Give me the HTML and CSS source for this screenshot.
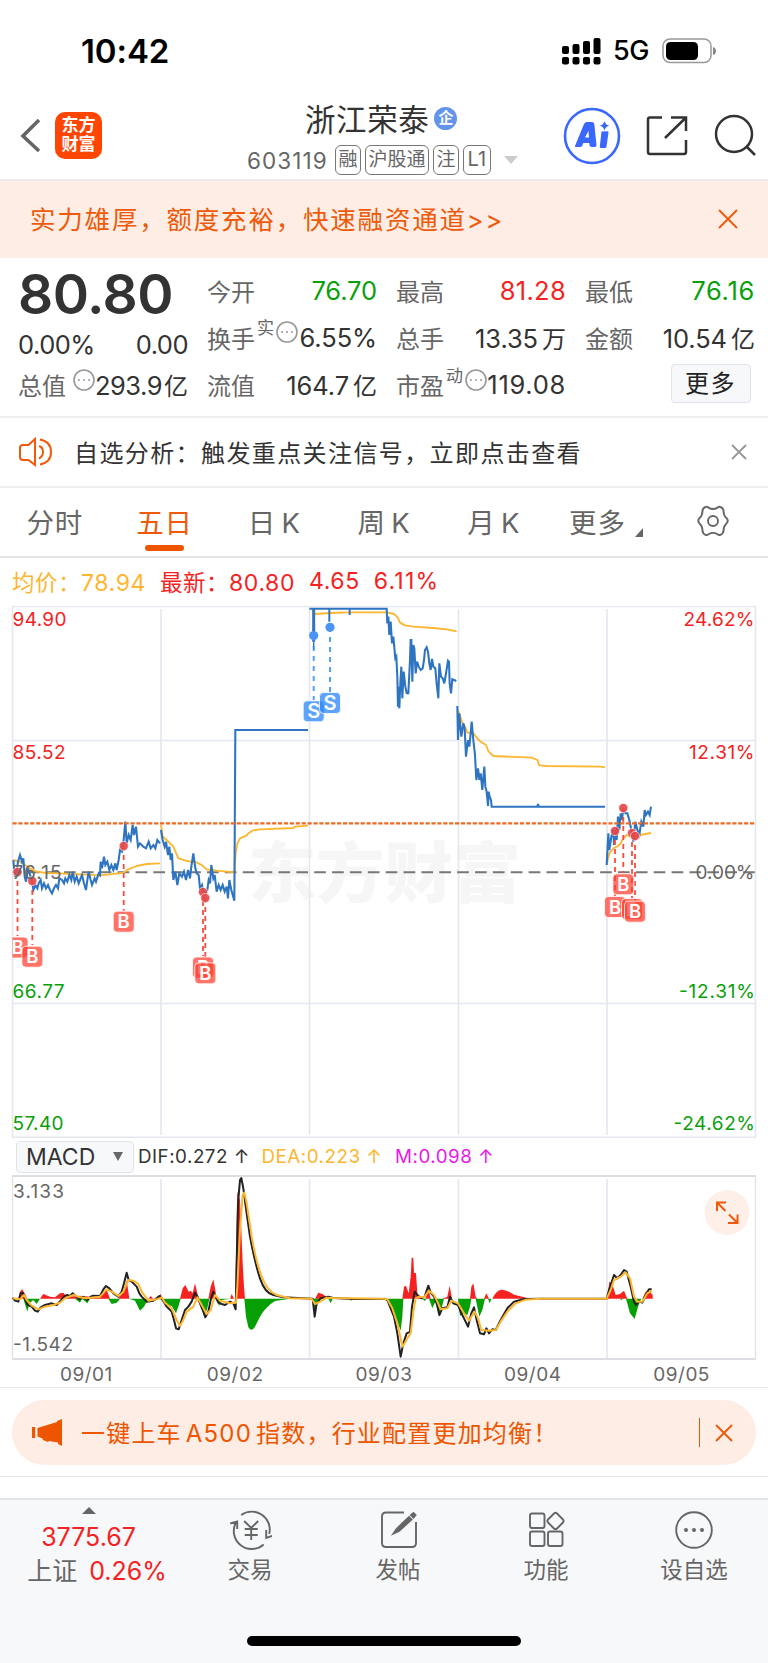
FILE: index.html
```html
<!DOCTYPE html>
<html lang="zh-CN">
<head>
<meta charset="utf-8">
<title>浙江荣泰 603119</title>
<link rel="stylesheet" href="styles.css">
</head>
<body>
<header class="status">
  <span class="clock">10:42</span>
  <span class="status-right">
    <svg class="signal" width="40" height="28" viewBox="0 0 40 28"><g fill="#000"><rect x="1" y="9" width="7" height="8" rx="2"/><rect x="11.500" y="7" width="7" height="10" rx="2"/><rect x="22" y="4" width="7" height="13" rx="2"/><rect x="32.500" y="1" width="7" height="16" rx="2"/><rect x="1" y="20" width="7" height="7.500" rx="2"/><rect x="11.500" y="20" width="7" height="7.500" rx="2"/><rect x="22" y="20" width="7" height="7.500" rx="2"/><rect x="32.500" y="20" width="7" height="7.500" rx="2"/></g></svg>
    <span class="net">5G</span>
    <svg width="56" height="26" viewBox="0 0 56 26"><rect x="1" y="1" width="48" height="23.500" rx="7" fill="none" stroke="#999" stroke-width="1.500"/><rect x="4" y="4" width="32" height="18" rx="4.500"/><path d="M51 9q3 1 3 4t-3 4z" fill="#888"/></svg>
  </span>
</header>

<nav class="topbar">
  <div class="top-left">
    <svg width="22" height="36" viewBox="0 0 22 36"><path d="M19 2 3 18l16 15" fill="none" stroke="#666" stroke-width="3.600"/></svg>
    <div class="logo"><span>东方</span><span>财富</span></div>
  </div>
  <div class="title-block">
    <div class="name">浙江荣泰<span class="ent">企</span></div>
    <div class="code-row"><span class="code">603119</span><span class="tag">融</span><span class="tag">沪股通</span><span class="tag">注</span><span class="tag lv">L1</span><svg class="drop" width="14" height="8" viewBox="0 0 14 8"><path d="M0 0h14L7 8z" fill="#ccc"/></svg></div>
  </div>
  <div class="top-icons">
    <svg class="ai" width="58" height="58" viewBox="0 0 58 58"><circle cx="29" cy="29" r="27" fill="none" stroke="#3a68ff" stroke-width="2.600"/><path d="M12 39 21 17q1-2 3-2h5q2 0 2.300 2L33.500 38q.2 2-1.800 2h-3q-2 0-2.200-2l-.2-2h-6l-1 2.500q-.6 1.500-2.300 1.500h-3.500q-2.500 0-1.500-1zM22 30.500h4l-.6-6.500z" fill="#3a68ff"/><path d="m38.500 24.500 6-.3q1.200 0 1 1.300l-2 14q-.2 1.500-1.700 1.500h-3.800q-1.500 0-1.200-1.500z" fill="#3a68ff"/><path d="M41.500 14q1 4 5 4.800-4 .8-5 4.700-1-4-5-4.700 4-.8 5-4.800z" fill="#3a68ff"/></svg>
    <svg width="42" height="42" viewBox="0 0 42 42" fill="none" stroke="#333" stroke-width="2.500"><path d="M16 2.500H4Q2 2.500 2 4.500V37q0 2 2 2h34q2 0 2-2V25M25 2.500h15V16M40 2.500 19 23"/></svg>
    <svg width="44" height="44" viewBox="0 0 44 44" fill="none" stroke="#333" stroke-width="2.500"><circle cx="21" cy="20" r="18"/><path d="m33 32 9 9"/></svg>
  </div>
</nav>

<div class="banner">
  <span>实力雄厚，额度充裕，快速融资通道&gt;&gt;</span>
  <svg width="20" height="20" viewBox="0 0 20 20"><path d="m1 1 18 18M19 1 1 19" stroke="#ee5a0a" stroke-width="1.900"/></svg>
</div>

<section class="quotes">
  <div class="qcol first">
    <div class="price">80.80</div>
    <div class="qrow chg"><b>0.00%</b><b>0.00</b></div>
    <div class="qrow"><i>总值</i><svg class="dots gap" width="22" height="22" viewBox="0 0 22 22"><circle cx="11" cy="11" r="10"/><path d="M5 11h2m3 0h2m3 0h2"/></svg><b class="v">293.9<em>亿</em></b></div>
  </div>
  <div class="qcol">
    <div class="qrow"><i>今开</i><b class="v green">76.70</b></div>
    <div class="qrow"><i>换手</i><sup>实</sup><svg class="dots" width="22" height="22" viewBox="0 0 22 22"><circle cx="11" cy="11" r="10"/><path d="M5 11h2m3 0h2m3 0h2"/></svg><b class="v">6.55%</b></div>
    <div class="qrow"><i>流值</i><b class="v">164.7<em>亿</em></b></div>
  </div>
  <div class="qcol">
    <div class="qrow"><i>最高</i><b class="v red">81.28</b></div>
    <div class="qrow"><i>总手</i><b class="v">13.35<em>万</em></b></div>
    <div class="qrow"><i>市盈</i><sup>动</sup><svg class="dots" width="22" height="22" viewBox="0 0 22 22"><circle cx="11" cy="11" r="10"/><path d="M5 11h2m3 0h2m3 0h2"/></svg><b class="v wide">119.08</b></div>
  </div>
  <div class="qcol">
    <div class="qrow"><i>最低</i><b class="v green wide">76.16</b></div>
    <div class="qrow"><i>金额</i><b class="v">10.54<em>亿</em></b></div>
    <div class="qrow"><button class="more">更多</button></div>
  </div>
</section>

<div class="notice">
  <svg width="34" height="30" viewBox="0 0 34 30" fill="none" stroke="#ee5a0a" stroke-width="2"><path d="M16 2v26L9.500 23H4q-3 0-3-3v-9q0-3 3-3h5.500zM20 9q4 1.500 4 6t-4 6.500M21 2.500q11 2 11 12.500T21 27.500"/></svg>
  <span>自选分析：触发重点关注信号，立即点击查看</span>
  <svg class="x" width="16" height="16" viewBox="0 0 16 16"><path d="m1 1 14 14M15 1 1 15" stroke="#999" stroke-width="1.900"/></svg>
</div>

<nav class="tabs">
  <span>分时</span><span class="active">五日</span><span>日 K</span><span>周 K</span><span>月 K</span>
  <span class="tab-more">更多<svg width="8" height="9" viewBox="0 0 8 9"><path d="M8 0v9H0z" fill="#666"/></svg></span>
  <span><svg width="34" height="32" viewBox="0 0 34 32" fill="none" stroke="#666" stroke-width="1.900"><path d="M9.500 2q1.500-.7 3 .6 4.500 2.800 9 0 1.500-1.300 3-.6 3 1.200 3 4 0 4.500 3 7.200 2.500 2.500 0 5.200-3 3-3 7.200 0 3-3 4.200-1.500.7-3-.6-4.500-2.700-9 0-1.500 1.300-3 .6-3-1.200-3-4.200 0-4.200-3-7.200-2.500-2.700 0-5.200 3-2.700 3-7.200 0-2.800 3-4z"/><circle cx="17" cy="16" r="5"/></svg></span>
</nav>

<div class="legend"><span class="avg">均价：<b>78.94</b></span><span class="last">最新：<b>80.80</b></span><b>4.65</b><b class="pct">6.11%</b></div>

<svg class="chart" width="768" height="532" viewBox="0 606 768 532">
  <defs>
    <g id="buy"><rect x="-10.500" y="-10.500" width="21" height="21" rx="4" fill="#ff3d2e" fill-opacity=".72" stroke="#fff" stroke-width=".8"/><text y="6.500" class="mark">B</text></g>
    <g id="sell"><rect x="-10.500" y="-10.500" width="21" height="21" rx="4" fill="#2b88fb" fill-opacity=".76" stroke="#fff" stroke-width=".8"/><text y="7" class="mark s">S</text></g>
    <clipPath id="plot"><rect x="12.500" y="606" width="744" height="532"/></clipPath>
  </defs>
  <text class="watermark" x="248" y="897" textLength="273" lengthAdjust="spacingAndGlyphs">东方财富</text>
  <g fill="none" stroke="#e3e7ef" stroke-width="1.600"><path d="M12.500 1138V606.500H755.500V1138M12 740.500H755M12 1003.500H755M12 1137.300H756M161 609v526M309.500 609v526M458.500 609v526M607 609v526"/></g>
  <path d="M12.500 872.300H755" stroke="#777" stroke-width="2" stroke-dasharray="11.700 6.170" stroke-dashoffset="2.100"/>
  <g fill="none" stroke="#fdb62f" stroke-width="5.500" stroke-linejoin="round">
    <g transform="translate(0 560) scale(.33333)"><path d="M40 900 60 905 90 925 110 935 140 939 180 940 210 942 260 944 300 946 330 943 370 938 385 928 410 918 440 912 480 910M483 795 488 830 500 840 520 860 535 895 560 903 590 907 605 915 620 928 650 932 703 937 707 880 712 850 720 835 740 826 745 820 760 811 780 808 880 804 885 800 924 797"/></g>
    <g transform="translate(290 560) scale(.33333)"><path d="M75 162 120 159 180 157 290 157 312 162 323 172 330 188 345 196 370 200 430 204 470 208 500 214"/></g>
    <g transform="translate(450 600) scale(.33333)"><path d="M24 330 36 365 45 380 52 398 70 400 88 422 108 435 116 455 130 468 245 473 262 480 268 496 290 498 450 500 465 502M470 795 478 760 490 745 504 738 512 730 520 715 530 705 545 712 570 705 603 699"/></g>
  </g>
  <g fill="none" stroke="#2f74c0" stroke-width="6.200" stroke-linejoin="miter">
    <g transform="translate(0 560) scale(.33333)"><path d="M40 900 45 950 50 935 54 905 60 885 66 905 70 895 74 950 78 965 84 925 90 945 96 960 100 990 106 975 112 985 116 970 122 960 126 985 132 970 138 985 144 975 150 990 156 1000 162 985 168 975 174 985 178 955 186 960 192 970 196 955 202 965 208 945 214 960 218 935 224 965 230 950 236 970 240 960 246 945 252 970 258 990 262 960 266 935 272 960 276 975 284 955 288 965 296 940 300 945 302 905 306 925 312 890 316 915 322 905 328 930 334 915 340 930 346 910 350 930 356 900 360 870 366 875 370 850 376 785 380 850 386 825 392 840 398 795 402 825 408 800 414 860 420 850 430 860 438 865 446 845 452 865 460 855 466 865 472 840 480 850M483 810 488 840 494 860 498 845 504 885 508 860 512 900 516 880 520 960 526 935 532 975 538 940 546 950 552 935 558 960 564 930 570 955 574 920 580 880 586 925 590 940 596 945 600 985 606 975 612 1010 616 1000 622 990 626 960 630 970 634 915 640 955 644 945 650 995 656 975 662 990 668 975 674 995 680 980 684 1015 688 960 694 990 703 1022 706 510 924 510"/></g>
    <g transform="translate(290 560) scale(.33333)"><path d="M58 146H290L292 190 295 170 298 225 302 185 306 250 310 230 316 295 319 290 322 350 324 440 325 380 328 445 331 370 334 320 337 415 341 335 346 380 350 400 355 400 360 300 362 240 364 240 367 365 370 255 373 265 377 340 381 305 386 320 392 330 398 325 402 300 405 270 410 262 414 275 418 310 422 330 426 297 430 320 436 325 440 370 445 415 448 310 453 350 458 355 463 370 468 340 474 302 477 305 479 370 483 400 487 358 492 360 499 363"/><path d="M71 146V245" stroke-width="9"/><path d="M71 240V268" stroke-width="4"/><path d="M118 146V185M179 146V165" stroke-width="6"/></g>
    <g transform="translate(450 600) scale(.33333)"><path d="M22 318 24 420 28 340 34 410 40 370 44 385 48 470 54 420 58 440 62 400 65 365 70 420 75 465 79 540 84 505 88 540 92 520 97 570 101 520 103 500 106 560 110 575 114 618 116 575 119 590 123 600 125 620 262 620 264 612 266 620 465 620M470 795 475 700 478 750 484 710 490 690 492 735 496 690 500 720 504 650 508 690 512 640 516 660 520 625 526 640 532 640 538 660 544 690 550 725 556 665 562 690 568 705 574 665 580 680 584 630 588 645 594 635 599 645 603 620"/></g>
  </g>
  <path d="M12.500 823.300H755" stroke="#ee6a22" stroke-width="2.200" stroke-dasharray="4.200 1.700"/>
  <g fill="none" stroke="#ff4a3b" stroke-width="1.800" stroke-dasharray="5 4"><path d="M17.500 872V936M32.300 881V945M123.700 846V911M203 892V956M205.300 898V962M615 831V896M623.300 808V873M632 833V898M635 836V901"/></g>
  <g fill="none" stroke="#2b88fb" stroke-opacity=".8" stroke-width="2" stroke-dasharray="5 5"><path d="M313.700 636V700M330 627V692"/></g>
  <g fill="#e5484a" fill-opacity=".92" stroke="#fff" stroke-width=".6"><circle cx="17.500" cy="872" r="4.600"/><circle cx="32.300" cy="881" r="4.600"/><circle cx="123.700" cy="846" r="4.600"/><circle cx="203" cy="892" r="4.600"/><circle cx="205.300" cy="898" r="4.600"/><circle cx="615" cy="831" r="4.600"/><circle cx="623.300" cy="808" r="4.600"/><circle cx="632" cy="833" r="4.600"/><circle cx="635" cy="836" r="4.600"/></g>
  <g fill="#4a94f8"><circle cx="313.700" cy="635.500" r="4.600"/><circle cx="330" cy="627.300" r="4.600"/></g>
  <g clip-path="url(#plot)">
    <use href="#buy" x="17.500" y="947.500"/><use href="#buy" x="32.300" y="956.700"/><use href="#buy" x="123.700" y="921.700"/><use href="#buy" x="203" y="967.500"/><use href="#buy" x="205.300" y="973.300"/>
    <use href="#buy" x="615" y="907"/><use href="#buy" x="623.300" y="884.300"/><use href="#buy" x="632" y="909"/><use href="#buy" x="635" y="911.700"/>
    <use href="#sell" x="313.700" y="711.300"/><use href="#sell" x="330" y="703"/>
  </g>
  <g class="axis">
    <text x="12.500" y="626" textLength="54" class="up">94.90</text><text x="12.500" y="758.500" textLength="53" class="up">85.52</text><text x="12.500" y="879" textLength="49" class="mid">76.15</text><text x="12.500" y="997.500" textLength="52" class="down">66.77</text><text x="12.500" y="1130" textLength="51" class="down">57.40</text>
    <text x="683.500" y="626" textLength="71" class="up">24.62%</text><text x="689" y="758.500" textLength="65.500" class="up">12.31%</text><text x="695.500" y="879" textLength="59" class="mid">0.00%</text><text x="679" y="997.500" textLength="76" class="down">-12.31%</text><text x="673.500" y="1130" textLength="81.500" class="down">-24.62%</text>
  </g>
</svg>

<div class="macd-head">
  <span class="select">MACD<svg width="10" height="9" viewBox="0 0 10 9"><path d="M0 0h10L5 9z" fill="#666"/></svg></span>
  <span class="dif">DIF:0.272 ↑</span><span class="dea">DEA:0.223 ↑</span><span class="m">M:0.098 ↑</span>
</div>

<svg class="chart" width="768" height="185" viewBox="0 1175 768 185">
  <path d="M12.500 1359V1176H755.500V1359" fill="none" stroke="#e0e3ea" stroke-width="1.300"/>
  <path d="M12 1176H756M12 1359H756" stroke="#dcdee3" stroke-width="1.800"/>
  <path d="M161 1179v179M309.500 1179v179M458.500 1179v179M607 1179v179" stroke="#e3e7ef" stroke-width="1.600"/>
  <g transform="translate(0 1120) scale(.33333)">
    <path fill="#f52222" d="M55 536 60 515 66 508 74 520 82 536zM120 536 130 522 150 530 165 532 180 520 190 518 200 530 240 527 300 533 308 520 320 510 330 536zM355 536 370 515 380 480 388 536zM445 536 452 528 460 536zM472 536 482 522 488 536zM540 536 548 505 556 495 566 515 572 512 578 520 585 490 592 520 598 536zM625 536 632 500 640 478 646 510 650 536zM690 536 695 522 702 536zM705 536 708 400 712 215 720 240 724 330 728 430 732 500 735 536zM945 536 955 518 968 522 985 536z"/>
    <path fill="#06a006" d="M70 536 82 575 88 550 100 540 110 552 120 536zM225 536 240 548 246 536 262 550 270 536zM325 536 335 552 350 548 360 536zM388 536 405 542 420 572 432 560 445 536zM490 536 500 556 515 558 528 580 535 560 542 536zM595 536 605 550 615 585 622 565 628 536zM650 536 657 558 665 540 690 536zM733 536 738 590 745 622Q755 638 765 620L780 590Q797 560 825 543L870 536zM938 536 944 595 950 545 960 536zM985 536 992 550 998 536zM1048 536 1053 543 1058 536z"/>
  </g>
  <g transform="translate(384 1120) scale(.33333)">
    <path fill="#f52222" d="M55 536 60 500 66 497 74 520 80 470 83 413 88 413 90 458 96 460 100 520 110 536zM125 536 133 505 140 536zM175 536 190 530 197 497 204 536zM258 536 262 500 268 490 275 530 280 536zM300 536 307 520 315 536zM325 536Q337 510 352 509T390 524L440 536zM670 536 676 485 684 490 695 525 708 522 720 512 730 536zM775 536 785 515 795 512 806 525 806 536z"/>
    <path fill="#06a006" d="M8 536 20 570 35 590 50 632 55 590 58 536zM115 536 122 543 128 536zM135 536 145 565 152 550 158 545 166 590 174 560 180 536zM222 536 228 588 238 580 250 585 258 560 262 536zM275 536 286 590 295 570 303 536zM312 536 317 550 322 536zM708 536 712 541 716 536zM726 536 738 580 752 597 762 560 770 540 772 536z"/>
  </g>
  <g fill="none" stroke-width="6" stroke-linejoin="round">
    <g transform="translate(0 1120) scale(.33333)">
      <path stroke="#222" d="M38 533 45 542 55 545 62 520 68 518 76 540 84 555 95 560 105 572 113 575 122 562 135 555 155 550 170 555 182 542 192 530 200 525 210 528 218 520 228 530 240 538 250 530 262 540 272 530 280 527 300 528 310 508 318 498 328 505 340 520 355 530 365 515 372 490 380 458 386 480 395 485 410 500 418 520 425 530 440 545 460 542 478 528 488 540 500 560 515 575 522 600 528 625 536 628 545 600 555 570 565 560 575 545 585 518 592 530 600 550 610 575 616 592 625 575 632 540 640 515 646 530 655 548 665 552 675 555 690 545 700 550 707 568 709 480 714 250 720 180 724 174 730 205 740 280 750 350 Q765 430 780 475 T820 525 L850 532 938 536 944 590 950 550 962 535 985 530 1000 534 1060 537 1152 537"/>
      <path stroke="#fdb62f" d="M38 535 60 538 72 525 80 540 95 557 115 568 135 560 160 555 180 548 195 535 220 525 240 532 260 535 300 530 320 508 335 515 355 528 370 515 385 480 400 482 415 492 425 515 445 542 470 538 485 532 495 548 515 565 530 600 540 618 550 600 560 575 580 560 592 532 605 555 620 582 632 570 645 525 660 542 690 550 708 548 712 500 720 330 728 225 733 218 740 250 755 350Q768 425 785 470T830 525L870 535 935 536 945 552 960 545 980 533 1000 534 1152 536"/>
    </g>
    <g transform="translate(384 1120) scale(.33333)">
      <path stroke="#222" d="M0 536 10 540 20 565 30 590 40 640 50 710 58 670 68 640 78 635 84 560 92 515 100 525 112 535 122 530 133 497 140 518 150 530 158 550 166 585 175 565 190 562 198 530 208 550 222 555 232 580 240 595 252 620 262 580 270 562 278 600 288 640 300 643 307 625 315 640 325 628 335 630 350 600 370 565 390 545 420 537 470 536 668 536 675 510 690 465 700 475 710 465 720 450 728 455 740 500 750 545 756 555 765 545 775 548 785 525 795 508 803 508"/>
      <path stroke="#fdb62f" d="M0 536 10 538 25 565 40 610 52 665 56 680 70 655 80 640 88 575 95 535 105 530 120 532 135 512 150 525 160 545 170 568 190 565 202 542 222 550 240 580 255 602 265 585 272 575 282 595 292 630 315 632 335 630 350 605 370 575 395 550 425 539 470 536 668 536 680 510 690 480 710 470 725 457 738 475 750 530 760 545 775 545 790 520 803 512"/>
    </g>
  </g>
  <circle cx="727" cy="1212.500" r="22.500" fill="#feefe8"/>
  <path d="M717 1211v-8.500h9M717.500 1203l8 8M737.500 1214.500v8.500h-9.500M737 1222.500l-8-8" fill="none" stroke="#ee5a0a" stroke-width="2"/>
  <g class="axis"><text x="13" y="1198" textLength="51" class="mid">3.133</text><text x="13" y="1351" textLength="60" class="mid">-1.542</text></g>
</svg>
<div class="dates"><span>09/01</span><span>09/02</span><span>09/03</span><span>09/04</span><span>09/05</span></div>

<div class="promo-wrap"><div class="promo">
  <svg width="31" height="27" viewBox="0 0 31 27" fill="#ee5500"><path d="M0 8h3.200v11H0zM5.500 9 25 3V2l5-2v27l-4-2v-1.500l-9-1.500-1 1-5-2-.5-1.500-5-2z"/></svg>
  <span class="promo-text">一键上车<b>A500</b>指数，行业配置更加均衡！</span>
  <span class="bar"></span>
  <svg width="18" height="18" viewBox="0 0 18 18"><path d="m1 1 16 16M17 1 1 17" stroke="#ee5a0a" stroke-width="1.900"/></svg>
</div></div>

<footer class="bottom">
  <div class="index"><svg width="14" height="7" viewBox="0 0 14 7"><path d="M0 7 7 0l7 7z" fill="#666"/></svg><b>3775.67</b><div>上证<b>0.26%</b></div></div>
  <div class="item"><svg width="44" height="40" viewBox="-1.200 0 44 40" fill="none" stroke="#666" stroke-width="1.900"><path d="M12 5A18 18 0 0 1 40 24M34.500 34.500A18 18 0 0 1 7 12M1 13.500l7-2V19M43 26l-6 2v-8M15 11l7 7 7-7M22 18v12M15.500 19h13M15.500 25h13"/></svg><span>交易</span></div>
  <div class="item"><svg width="44" height="40" viewBox="-1 0 44 40" fill="none" stroke="#666" stroke-width="1.900"><path d="M27 2.500H9q-4 0-4 4V33q0 4 4 4h26q4 0 4-4V12"/><path d="m16.500 23.500 3-4.500L32 7l2.500 2.500L22 21zM34 5l2.500-2 2 2-2 2.500z" fill="#666"/></svg><span>发帖</span></div>
  <div class="item"><svg width="44" height="40" viewBox="0 0 44 40" fill="none" stroke="#666" stroke-width="1.900"><rect x="6" y="3.500" width="14.500" height="14.500" rx="2"/><rect x="6" y="21.500" width="14.500" height="14.500" rx="2"/><rect x="24" y="21.500" width="14.500" height="14.500" rx="2"/><path d="M30 3.500q1.500-1.300 3 0l6 6q1.200 1.500 0 3l-6 6q-1.500 1.200-3 0l-6-6q-1.200-1.500 0-3z"/></svg><span>功能</span></div>
  <div class="item"><svg width="44" height="40" viewBox="0 0 44 40" fill="none" stroke="#666" stroke-width="1.900"><circle cx="22" cy="20" r="17.800"/><g fill="#666" stroke="none"><circle cx="14" cy="20" r="2"/><circle cx="22" cy="20" r="2"/><circle cx="30" cy="20" r="2"/></g></svg><span>设自选</span></div>
  <div class="home"></div>
</footer>
</body>
</html>
```
FILE: styles.css
```css
* { box-sizing: border-box; }
body {
  margin: 0;
  width: 768px;
  height: 1663px;
  background: #fff;
  color: #333;
  font-family: Inter, "Noto Sans CJK SC", sans-serif;
  font-weight: 400;
  overflow: hidden;
}
svg { display: block; flex: none; }
b { font-weight: 400; }
i, em { font-style: normal; }
span, i, b, em { white-space: nowrap; }

.status { height: 90px; padding: 12px 50px 0 81px; display: flex; justify-content: space-between; align-items: center; color: #000; }
.clock { font-size: 33px; font-weight: 600; letter-spacing: -0.100px; line-height: 40px; }
.status-right { display: flex; align-items: center; }
.signal { margin-right: 12px; }
.net { font-size: 27px; font-weight: 500; letter-spacing: -0.5px; width: 49px; line-height: 30px; }

.topbar { height: 91px; border-bottom: 2px solid #ebebeb; display: grid; grid-template-columns: 240px 1fr 208px; }
.top-left { display: flex; align-items: flex-start; padding: 22px 0 0 20px; gap: 13px; }
.top-left svg { margin-top: 6px; }
.logo { width: 47px; height: 47px; border-radius: 10px; background: #ff4502; color: #fff; display: flex; flex-direction: column; align-items: center; justify-content: center; font-size: 17px; font-weight: 700; line-height: 19px; padding-bottom: 1px; }
.title-block { padding-top: 11px; }
.name { height: 34px; display: flex; align-items: center; padding-left: 65px; font-size: 30.500px; letter-spacing: 0.600px; }
.ent { width: 23px; height: 23px; border-radius: 50%; background: #6394ea; color: #fff; font-size: 15px; font-weight: 700; line-height: 22px; text-align: center; margin-left: 5px; letter-spacing: 0; }
.code-row { margin-top: 10px; height: 30px; display: flex; align-items: center; padding-left: 7px; color: #666; }
.code { font-size: 22.500px; width: 88px; letter-spacing: 1.100px; }
.tag { border: 1.500px solid #777; border-radius: 6px; height: 30px; padding: 0 2.500px; margin-right: 4px; font-size: 19px; line-height: 27px; color: #666; }
.tag.lv { padding: 0 3.500px; font-size: 20px; }
.drop { margin-left: 9px; }
.top-icons { display: flex; align-items: flex-start; padding-top: 16px; }
.ai { margin: 1px 25px 0 3px; }
.top-icons svg:nth-child(2) { margin: 9px 26px 0 0; }
.top-icons svg:nth-child(3) { margin: 8px 0 0 -1px; }

.banner { height: 77px; background: #feede5; color: #ee5a0a; display: flex; align-items: center; justify-content: space-between; padding: 0 30px 0 30px; font-size: 25.500px; }
.banner span { letter-spacing: 1.800px; margin-top: -4px; }
.banner svg { margin-top: -2px; }

.quotes { height: 160px; border-bottom: 2px solid #efeff1; display: flex; gap: 19px; padding: 8.500px 13px 0 18px; }
.qcol { width: 170px; }
.qrow { height: 47.300px; display: flex; align-items: center; font-size: 24px; color: #666; }
.qrow b { color: #333; font-size: 25.500px; letter-spacing: -0.100px; }
.first .qrow b { letter-spacing: -0.500px; }
.qrow .wide { letter-spacing: 0.700px; }
.qrow .v { margin-left: auto; }
.qrow em { font-size: 24px; margin-left: 4px; letter-spacing: 0; }
.first .qrow em { margin-left: 2px; }
.qrow sup { font-size: 17px; line-height: 20px; margin: -18px 2px 0 2px; }
.qrow .green { color: #0aa00a; }
.qrow .red { color: #f52222; letter-spacing: 0.300px; }
.dots { fill: none; stroke: #999; stroke-width: 1.600; margin-top: -10px; }
.dots.gap { margin-left: 7px; }
.price { height: 61.500px; font-size: 55px; line-height: 55px; font-weight: 600; letter-spacing: -0.500px; }
.chg { height: 33px; justify-content: space-between; }
.more { font: 400 24px/30px Inter, "Noto Sans CJK SC", sans-serif; color: #222; width: 80px; height: 39px; padding: 0; margin: -2px 0 0 85.500px; letter-spacing: 1.500px; border: 1.500px solid #e0e4ea; border-radius: 4px; background: #f7f8fa; }

.notice { height: 70px; border-bottom: 2px solid #efeff1; display: flex; align-items: center; padding: 0 20px 0 19px; font-size: 24px; }
.notice span { margin: -2px 0 0 21px; letter-spacing: 1.400px; }
.notice .x { margin: 0 1px 0 auto; }

.tabs { height: 70px; border-bottom: 2px solid #e1e3e8; display: grid; grid-template-columns: repeat(7, 1fr); font-size: 27.500px; color: #666; }
.tabs > span { display: flex; align-items: center; justify-content: center; letter-spacing: 0.800px; word-spacing: -3px; padding-bottom: 2px; }
.tabs .active { color: #ee5a0a; position: relative; }
.active::after { content: ""; position: absolute; bottom: 5px; left: 35px; width: 39px; height: 6px; border-radius: 3px; background: #ee5500; }
.tabs .tab-more { padding-left: 5px; }
.tab-more svg { margin: 22px 0 0 9px; }

.legend { height: 48px; display: flex; align-items: center; padding: 0 0 2px 12px; font-size: 22.500px; color: #f52222; letter-spacing: 0.500px; }
.legend b { font-size: 23px; letter-spacing: 0.600px; }
.legend .avg { color: #fdb62f; margin-right: 14px; }
.legend .last { margin-right: 14px; }
.legend > b { margin-right: 14px; }
.legend .pct { letter-spacing: 1.200px; }

.chart { display: block; }
.axis text { font: 400 19px Inter, sans-serif; }
.up { fill: #f52222; }
.down { fill: #0aa00a; }
.mid { fill: #666; }
.mark { font: 600 18.500px Inter, sans-serif; fill: #fff; text-anchor: middle; }
.mark.s { font-size: 20px; }
.watermark { font: 900 66px "Noto Sans CJK SC", sans-serif; fill: #f6f6f6; }

.macd-head { height: 37px; display: flex; align-items: center; padding-left: 16px; font-size: 18.800px; letter-spacing: 0.500px; }
.select { width: 118px; height: 32px; border: 1.500px solid #e0e4ea; border-radius: 4px; background: #f7f8fa; font-size: 23px; letter-spacing: 0; display: flex; align-items: center; justify-content: space-between; padding: 0 10px 0 9px; margin-right: 4px; }
.dif { width: 123.500px; }
.dea { width: 133.500px; color: #fdb62f; }
.m { color: #e619e6; }
.dates { height: 28px; border-bottom: 1.500px solid #e9e9ec; display: grid; grid-template-columns: repeat(5, 1fr); padding: 0 12px; text-align: center; font-size: 19px; line-height: 29px; letter-spacing: 0.500px; color: #666; }

.promo-wrap { height: 89px; padding: 12px 12px 0; border-bottom: 1.500px solid #e3e5ea; }
.promo { height: 65px; border-radius: 33px; background: #feede5; color: #ee5500; display: flex; align-items: center; padding: 0 23px 0 20px; font-size: 24px; }
.promo-text { margin: -3px 0 0 18px; letter-spacing: 1.200px; }
.promo-text b { margin: 0 4px; }
.bar { width: 1.500px; height: 29px; background: #ee5500; margin: 0 15px 0 auto; }

.bottom { height: 165px; margin-top: 21px; border-top: 2px solid #e1e3e6; background: #f7f8fa; display: grid; grid-template-columns: 176px repeat(4, 1fr); grid-template-rows: 136px 10px; color: #666; }
.index { display: flex; flex-direction: column; align-items: center; padding: 7px 0 0 1px; font-size: 25px; line-height: 34px; }
.index b { color: #f52222; font-size: 25px; letter-spacing: 0; }
.index > b { margin-top: 6px; }
.index div { margin: 0 0 0 17px; }
.index div b { margin-left: 12px; }
.item { display: flex; flex-direction: column; align-items: center; padding-top: 10px; font-size: 22.500px; line-height: 36px; }
.item span { margin-top: 2px; }
.home { grid-column: 1 / -1; justify-self: center; width: 274px; height: 10px; border-radius: 5px; background: #000; }
```
